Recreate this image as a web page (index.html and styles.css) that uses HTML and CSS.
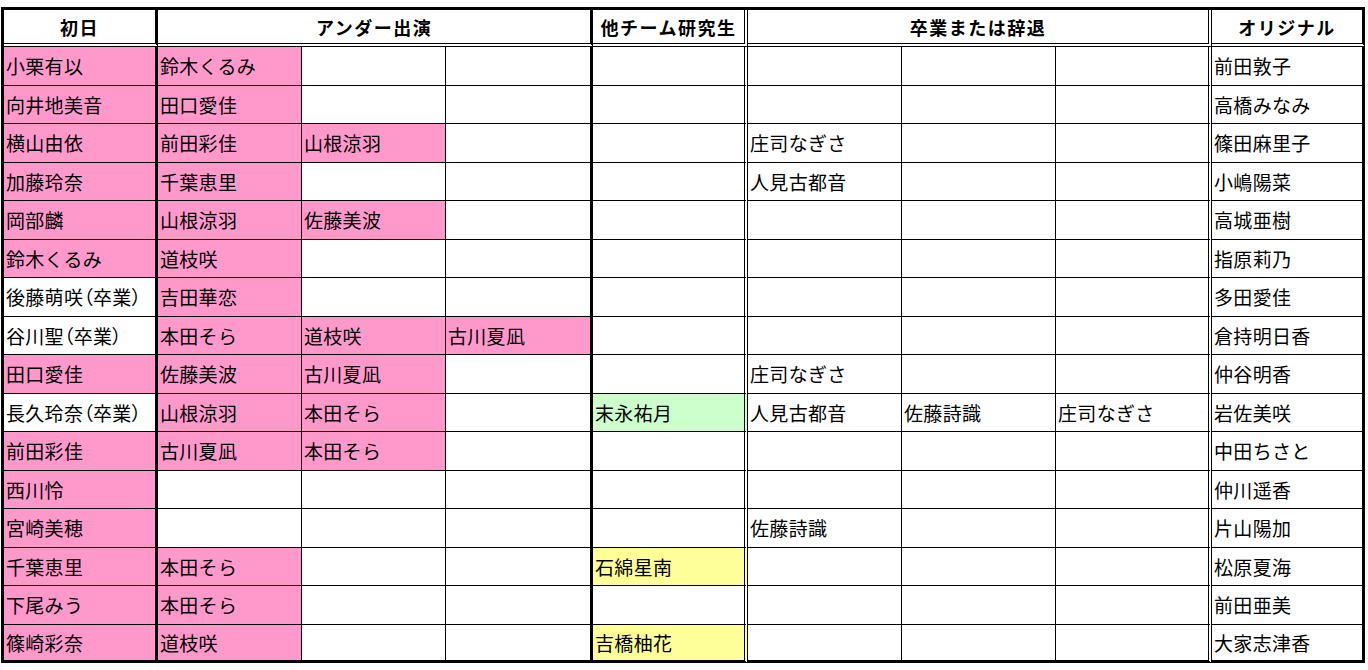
FILE: index.html
```html
<!DOCTYPE html>
<html lang="ja">
<head>
<meta charset="utf-8">
<title>チーム表</title>
<link rel="stylesheet" href="styles.css">
</head>
<body>
<table class="sheet">
  <colgroup>
    <col class="w1"><col class="w2"><col class="w3"><col class="w4"><col class="w5"><col class="w6"><col class="w7"><col class="w8"><col class="w9">
  </colgroup>
  <thead>
    <tr class="head">
      <th class="c1">初日</th>
      <th class="c4" colspan="3">アンダー出演</th>
      <th class="c5">他チーム研究生</th>
      <th class="c8" colspan="3">卒業または辞退</th>
      <th class="c9">オリジナル</th>
    </tr>
  </thead>
  <tbody>
    <tr><td class="c1 pk">小栗有以</td><td class="pk">鈴木くるみ</td><td></td><td class="c4"></td><td class="c5"></td><td></td><td></td><td class="c8"></td><td class="c9">前田敦子</td></tr>
    <tr><td class="c1 pk">向井地美音</td><td class="pk">田口愛佳</td><td></td><td class="c4"></td><td class="c5"></td><td></td><td></td><td class="c8"></td><td class="c9">高橋みなみ</td></tr>
    <tr><td class="c1 pk">横山由依</td><td class="pk">前田彩佳</td><td class="pk">山根涼羽</td><td class="c4"></td><td class="c5"></td><td>庄司なぎさ</td><td></td><td class="c8"></td><td class="c9">篠田麻里子</td></tr>
    <tr><td class="c1 pk">加藤玲奈</td><td class="pk">千葉恵里</td><td></td><td class="c4"></td><td class="c5"></td><td>人見古都音</td><td></td><td class="c8"></td><td class="c9">小嶋陽菜</td></tr>
    <tr><td class="c1 pk">岡部麟</td><td class="pk">山根涼羽</td><td class="pk">佐藤美波</td><td class="c4"></td><td class="c5"></td><td></td><td></td><td class="c8"></td><td class="c9">高城亜樹</td></tr>
    <tr><td class="c1 pk">鈴木くるみ</td><td class="pk">道枝咲</td><td></td><td class="c4"></td><td class="c5"></td><td></td><td></td><td class="c8"></td><td class="c9">指原莉乃</td></tr>
    <tr><td class="c1">後藤萌咲<span class="note">（卒業）</span></td><td class="pk">吉田華恋</td><td></td><td class="c4"></td><td class="c5"></td><td></td><td></td><td class="c8"></td><td class="c9">多田愛佳</td></tr>
    <tr><td class="c1">谷川聖<span class="note">（卒業）</span></td><td class="pk">本田そら</td><td class="pk">道枝咲</td><td class="c4 pk">古川夏凪</td><td class="c5"></td><td></td><td></td><td class="c8"></td><td class="c9">倉持明日香</td></tr>
    <tr><td class="c1 pk">田口愛佳</td><td class="pk">佐藤美波</td><td class="pk">古川夏凪</td><td class="c4"></td><td class="c5"></td><td>庄司なぎさ</td><td></td><td class="c8"></td><td class="c9">仲谷明香</td></tr>
    <tr><td class="c1">長久玲奈<span class="note">（卒業）</span></td><td class="pk">山根涼羽</td><td class="pk">本田そら</td><td class="c4"></td><td class="c5 gr">末永祐月</td><td>人見古都音</td><td>佐藤詩識</td><td class="c8">庄司なぎさ</td><td class="c9">岩佐美咲</td></tr>
    <tr><td class="c1 pk">前田彩佳</td><td class="pk">古川夏凪</td><td class="pk">本田そら</td><td class="c4"></td><td class="c5"></td><td></td><td></td><td class="c8"></td><td class="c9">中田ちさと</td></tr>
    <tr><td class="c1 pk">西川怜</td><td></td><td></td><td class="c4"></td><td class="c5"></td><td></td><td></td><td class="c8"></td><td class="c9">仲川遥香</td></tr>
    <tr><td class="c1 pk">宮崎美穂</td><td></td><td></td><td class="c4"></td><td class="c5"></td><td>佐藤詩識</td><td></td><td class="c8"></td><td class="c9">片山陽加</td></tr>
    <tr><td class="c1 pk">千葉恵里</td><td class="pk">本田そら</td><td></td><td class="c4"></td><td class="c5 yl">石綿星南</td><td></td><td></td><td class="c8"></td><td class="c9">松原夏海</td></tr>
    <tr><td class="c1 pk">下尾みう</td><td class="pk">本田そら</td><td></td><td class="c4"></td><td class="c5"></td><td></td><td></td><td class="c8"></td><td class="c9">前田亜美</td></tr>
    <tr class="last"><td class="c1 pk">篠崎彩奈</td><td class="pk">道枝咲</td><td></td><td class="c4"></td><td class="c5 yl">吉橋柚花</td><td></td><td></td><td class="c8"></td><td class="c9">大家志津香</td></tr>
  </tbody>
</table>
</body>
</html>
```

FILE: styles.css
```css
* {
  box-sizing: border-box;
}

body {
  margin: 0;
  background: #ffffff;
  color: #000000;
  font-family: "Noto Sans CJK JP", "Noto Sans", sans-serif;
}

.sheet {
  margin: 7px 0 0 1px;
  width: 1364px;
  table-layout: fixed;
  border-collapse: separate;
  border-spacing: 0;
  border-top: 3px solid #000;
  border-left: 3px solid #000;
}

.w1 { width: 154px; }
.w2 { width: 144px; }
.w3 { width: 144px; }
.w4 { width: 147px; }
.w5 { width: 155px; }
.w6 { width: 154px; }
.w7 { width: 154px; }
.w8 { width: 156px; }
.w9 { width: 153px; }

.sheet th,
.sheet td {
  border-right: 1px solid #000;
  border-bottom: 1px solid #000;
  padding: 0 0 0 2px;
  white-space: nowrap;
  overflow: hidden;
  vertical-align: middle;
  line-height: 1;
}

.sheet tr.head {
  height: 37px;
}

.sheet th {
  border-bottom: 4px double #000;
  font-size: 18px;
  font-weight: 700;
  letter-spacing: 1.5px;
  text-align: center;
  padding: 0;
}

.sheet tbody tr {
  height: 38.5px;
}

.sheet td {
  font-size: 19px;
  font-weight: 400;
  text-align: left;
  letter-spacing: 0.3px;
}

.sheet tr.last td {
  border-bottom: 3px solid #000;
}

.sheet .c1 { border-right: 3px solid #000; }
.sheet .c4 { border-right: 3px solid #000; }
.sheet .c5 { border-right: 4px double #000; }
.sheet .c8 { border-right: 4px double #000; }
.sheet .c9 { border-right: 3px solid #000; }

.pk { background: #ff99cc; }
.gr { background: #ccffcc; }
.yl { background: #ffff99; }

.note {
  font-feature-settings: "palt";
}
```
